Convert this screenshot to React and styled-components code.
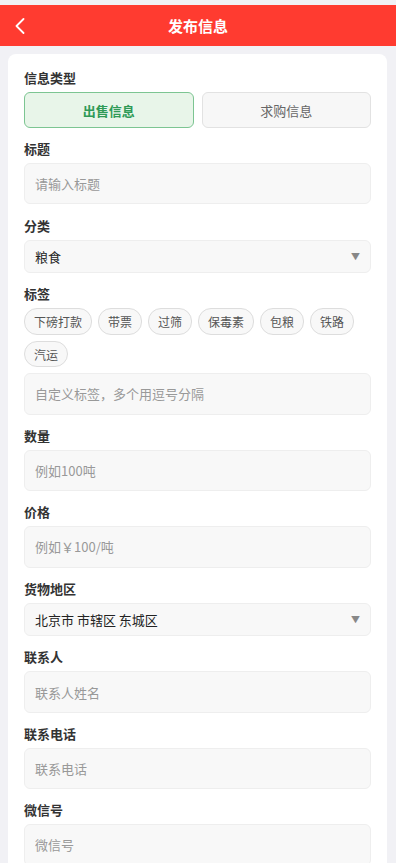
import { useState } from "react"
import styled, { createGlobalStyle } from "styled-components"

const GlobalStyle = createGlobalStyle`
    body {
        margin: 0;
        background: #f1f1f5;
        font-family: "Noto Sans CJK SC", "Noto Sans", sans-serif;
    }
`

const tags = ["下磅打款", "带票", "过筛", "保毒素", "包粮", "铁路", "汽运"]

export default function App() {
    const [type, setType] = useState("sell")

    return <Page>
        <GlobalStyle />
        <Header>
            <BackButton aria-label="返回">
                <svg width="10" height="16" viewBox="0 0 10 16" fill="none">
                    <polyline points="8.5,1 1.5,8 8.5,15" stroke="#fff" strokeWidth="1.8" strokeLinecap="round" strokeLinejoin="round" />
                </svg>
            </BackButton>
            <Title>发布信息</Title>
        </Header>

        <Card>
            <Field>
                <Label>信息类型</Label>
                <TypeRow>
                    <TypeButton $active={type === "sell"} onClick={() => setType("sell")}>出售信息</TypeButton>
                    <TypeButton $active={type === "buy"} onClick={() => setType("buy")}>求购信息</TypeButton>
                </TypeRow>
            </Field>

            <Field>
                <Label>标题</Label>
                <TextInput placeholder="请输入标题" />
            </Field>

            <Field>
                <Label>分类</Label>
                <SelectBox>
                    <span>粮食</span>
                    <Arrow>▼</Arrow>
                </SelectBox>
            </Field>

            <Field>
                <Label>标签</Label>
                <ChipRow>
                    {tags.map(t => <Chip key={t}>{t}</Chip>)}
                </ChipRow>
                <TextInput placeholder="自定义标签，多个用逗号分隔" />
            </Field>

            <Field>
                <Label>数量</Label>
                <TextInput placeholder="例如100吨" />
            </Field>

            <Field>
                <Label>价格</Label>
                <TextInput placeholder="例如￥100/吨" />
            </Field>

            <Field>
                <Label>货物地区</Label>
                <SelectBox>
                    <span>北京市 市辖区 东城区</span>
                    <Arrow>▼</Arrow>
                </SelectBox>
            </Field>

            <Field>
                <Label>联系人</Label>
                <TextInput placeholder="联系人姓名" />
            </Field>

            <Field>
                <Label>联系电话</Label>
                <TextInput placeholder="联系电话" />
            </Field>

            <Field>
                <Label>微信号</Label>
                <TextInput placeholder="微信号" />
            </Field>
        </Card>
    </Page>
}

const Page = styled.div`
    padding-top: 5px;
    min-height: 100vh;
    box-sizing: border-box;
`

const Header = styled.header`
    height: 41px;
    background: #ff3b30;
    display: flex;
    align-items: center;
    justify-content: center;
    position: relative;
`

const BackButton = styled.button`
    position: absolute;
    left: 8px;
    top: 0;
    height: 41px;
    width: 24px;
    display: flex;
    align-items: center;
    justify-content: center;
    background: none;
    border: none;
    padding: 0;
`

const Title = styled.h1`
    margin: 0;
    font-size: 15px;
    font-weight: 700;
    color: #fff;
`

const Card = styled.main`
    background: #fff;
    border-radius: 8px;
    margin: 8px 9px 0 8px;
    padding: 14px 16px 20px;
`

const Field = styled.div`
    margin-bottom: 11.2px;
`

const Label = styled.div`
    font-size: 13px;
    font-weight: 700;
    line-height: 20px;
    color: #333;
    margin-bottom: 4px;
`

const TypeRow = styled.div`
    display: grid;
    grid-template-columns: 1fr 1fr;
    gap: 8px;
`

const TypeButton = styled.button`
    height: 36px;
    border-radius: 6px;
    font-family: inherit;
    font-size: 13px;
    border: 1px solid ${(p) => p.$active ? "#7cc592" : "#e2e2e2"};
    background: ${(p) => p.$active ? "#e8f5e9" : "#f7f7f7"};
    color: ${(p) => p.$active ? "#2f9a57" : "#666"};
    font-weight: ${(p) => p.$active ? 700 : 400};
`

const TextInput = styled.input`
    display: block;
    width: 100%;
    box-sizing: border-box;
    height: 41.3px;
    padding: 0 10px;
    border: 1px solid #eee;
    border-radius: 6px;
    background: #f8f8f8;
    font-family: inherit;
    font-size: 13px;
    color: #333;
    outline: none;

    &::placeholder {
        color: #999;
    }
`

const SelectBox = styled.div`
    height: 33.4px;
    box-sizing: border-box;
    padding: 0 10px;
    border: 1px solid #eee;
    border-radius: 6px;
    background: #f8f8f8;
    display: flex;
    align-items: center;
    justify-content: space-between;
    font-size: 13px;
    color: #222;
`

const Arrow = styled.span`
    font-size: 9px;
    color: #888;
`

const ChipRow = styled.div`
    display: flex;
    flex-wrap: wrap;
    gap: 6.5px 6px;
    margin-bottom: 6px;
`

const Chip = styled.span`
    height: 26.3px;
    box-sizing: border-box;
    padding: 0 9px;
    border: 1px solid #ddd;
    border-radius: 13px;
    background: #f8f8f8;
    display: flex;
    align-items: center;
    font-size: 12px;
    color: #555;
`
